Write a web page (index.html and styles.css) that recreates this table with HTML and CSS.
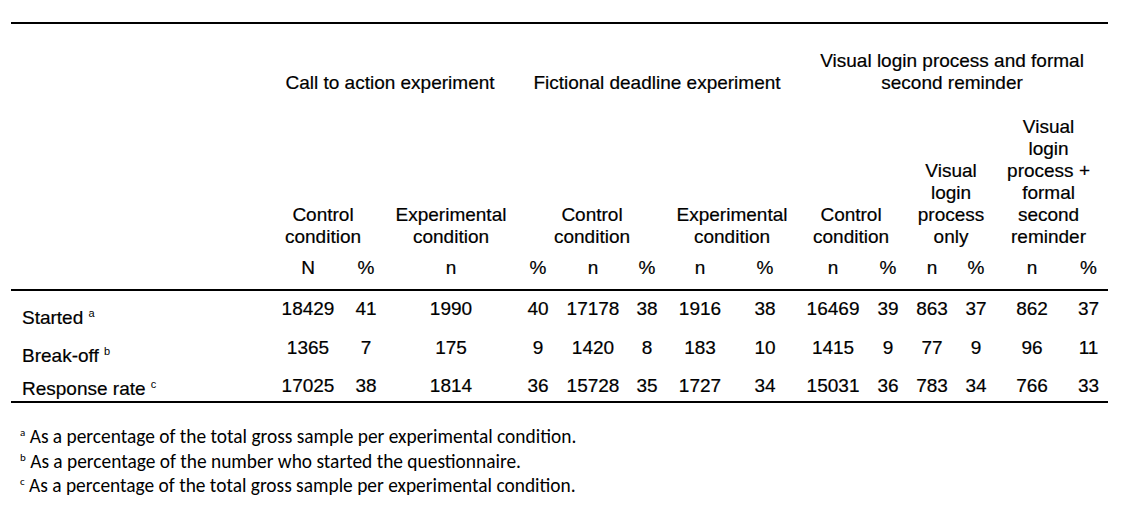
FILE: index.html
```html
<!DOCTYPE html>
<html lang="en">
<head>
<meta charset="utf-8">
<title>Response table</title>
<link rel="stylesheet" href="styles.css">
</head>
<body>
<main class="page">
  <table class="results">
    <colgroup>
      <col class="c-label">
      <col class="c1"><col class="c2"><col class="c3"><col class="c4"><col class="c5">
      <col class="c6"><col class="c7"><col class="c8"><col class="c9"><col class="c10">
      <col class="c11"><col class="c12"><col class="c13"><col class="c14">
    </colgroup>
    <thead>
      <tr class="group-row">
        <th class="label-head" rowspan="3"></th>
        <th colspan="3" class="g-call">Call to action experiment</th>
        <th colspan="5">Fictional deadline experiment</th>
        <th colspan="6" class="g-visual">Visual login process and formal<br>second reminder</th>
      </tr>
      <tr class="sub-row">
        <th colspan="2" class="s-shift10">Control<br>condition</th>
        <th>Experimental<br>condition</th>
        <th colspan="3">Control<br>condition</th>
        <th colspan="2" class="s-shift6">Experimental<br>condition</th>
        <th colspan="2" class="s-shift7">Control<br>condition</th>
        <th colspan="2" class="s-shift6">Visual<br>login<br>process<br>only</th>
        <th colspan="2" class="s-shift6">Visual<br>login<br>process +<br>formal<br>second<br>reminder</th>
      </tr>
      <tr class="unit-row">
        <th>N</th><th>%</th><th>n</th><th>%</th><th>n</th><th>%</th><th>n</th>
        <th>%</th><th>n</th><th>%</th><th>n</th><th>%</th><th>n</th><th class="last">%</th>
      </tr>
    </thead>
    <tbody>
      <tr class="r1">
        <td class="row-label">Started <sup class="note">a</sup></td>
        <td>18429</td><td>41</td><td>1990</td><td>40</td><td>17178</td><td>38</td><td>1916</td>
        <td>38</td><td>16469</td><td>39</td><td>863</td><td>37</td><td>862</td><td class="last">37</td>
      </tr>
      <tr class="r2">
        <td class="row-label">Break-off <sup class="note">b</sup></td>
        <td>1365</td><td>7</td><td>175</td><td>9</td><td>1420</td><td>8</td><td>183</td>
        <td>10</td><td>1415</td><td>9</td><td>77</td><td>9</td><td>96</td><td class="last">11</td>
      </tr>
      <tr class="r3">
        <td class="row-label">Response rate <sup class="note">c</sup></td>
        <td>17025</td><td>38</td><td>1814</td><td>36</td><td>15728</td><td>35</td><td>1727</td>
        <td>34</td><td>15031</td><td>36</td><td>783</td><td>34</td><td>766</td><td class="last">33</td>
      </tr>
    </tbody>
  </table>

  <div class="footnotes">
    <p><sup>a</sup> As a percentage of the total gross sample per experimental condition.</p>
    <p><sup>b</sup> As a percentage of the number who started the questionnaire.</p>
    <p><sup>c</sup> As a percentage of the total gross sample per experimental condition.</p>
  </div>
</main>
</body>
</html>
```

FILE: styles.css
```css
html, body {
  margin: 0;
  padding: 0;
  background: #ffffff;
  color: #000000;
}

.page {
  padding: 22px 0 0 11px;
}

.results {
  table-layout: fixed;
  width: 1097px;
  border-collapse: separate;
  border-spacing: 0;
  font-family: "Liberation Sans", Arial, sans-serif;
  font-size: 19px;
  color: #000;
  -webkit-text-stroke: 0.2px #000;
}

.c-label { width: 264px; }
.c1 { width: 66px; }
.c2 { width: 50px; }
.c3 { width: 120px; }
.c4 { width: 54px; }
.c5 { width: 56px; }
.c6 { width: 52px; }
.c7 { width: 54px; }
.c8 { width: 76px; }
.c9 { width: 60px; }
.c10 { width: 50px; }
.c11 { width: 38px; }
.c12 { width: 50px; }
.c13 { width: 62px; }
.c14 { width: 45px; }

.results th,
.results td {
  padding: 0;
  font-weight: normal;
  text-align: center;
  white-space: nowrap;
}

.label-head {
  border-top: 2px solid #000;
  border-bottom: 2px solid #000;
}

.group-row th {
  border-top: 2px solid #000;
  vertical-align: bottom;
  line-height: 22px;
  padding-top: 26px;
  padding-bottom: 22px;
}

.results .group-row .label-head {
  padding: 0;
}

.results .g-call { padding-right: 6px; }
.results .g-visual { padding-right: 7px; }

.sub-row th {
  vertical-align: bottom;
  line-height: 22px;
  padding-bottom: 9px;
}

.results .s-shift10 { padding-right: 20px; }
.results .s-shift7 { padding-right: 14px; }
.results .s-shift6 { padding-right: 12px; }

.unit-row th {
  line-height: 22px;
  padding-bottom: 10px;
  border-bottom: 2px solid #000;
  vertical-align: bottom;
}

.results .last { padding-left: 6px; }

.results tbody td {
  vertical-align: top;
  line-height: 22px;
  padding-top: 7px;
}

.r1 td { padding-bottom: 10px; }
.r2 td { padding-bottom: 9px; }
.r3 td {
  padding-bottom: 4px;
  border-bottom: 2px solid #000;
}

.results tbody .row-label {
  text-align: left;
  vertical-align: bottom;
  padding: 0 0 1px 11px;
}

.note {
  font-size: 11px;
  line-height: 0;
  vertical-align: 7px;
  -webkit-text-stroke: 0;
}

.footnotes {
  margin-top: 22px;
  padding-left: 9px;
  font-family: "Carlito", "Lato", "Open Sans", sans-serif;
  font-size: 19.4px;
  line-height: 24.5px;
}

.footnotes p {
  margin: 0;
}

.footnotes sup {
  font-size: 11px;
  line-height: 0;
  vertical-align: 7px;
}
```
